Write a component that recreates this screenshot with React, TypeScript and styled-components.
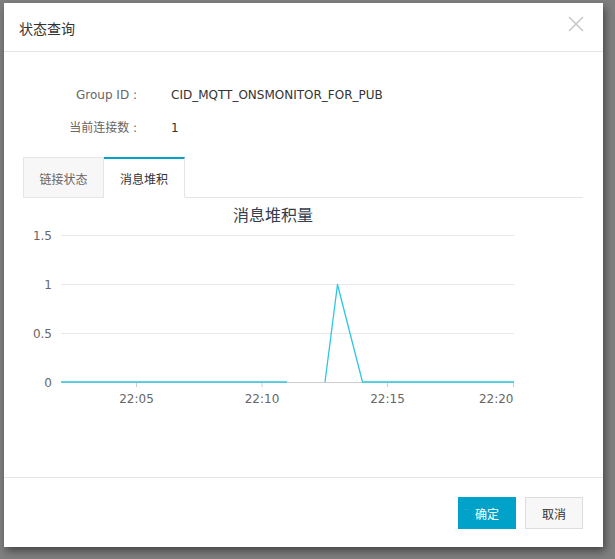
import styled, { createGlobalStyle } from "styled-components";

const GlobalStyle = createGlobalStyle`
  html, body {
    margin: 0;
    padding: 0;
    background: #7f7f7f;
  }
  body {
    font-family: "DejaVu Sans", "Noto Sans CJK SC", sans-serif;
    font-size: 12px;
    color: #333;
  }
`;

const Page = styled.div`
  width: 615px;
  height: 559px;
  padding: 3px 0 0 4px;
  box-sizing: border-box;
`;

const Dialog = styled.div`
  width: 599px;
  height: 544px;
  background: #fff;
  display: flex;
  flex-direction: column;
  box-shadow: 2px 4px 8px rgba(0, 0, 0, 0.45);
`;

const Header = styled.div`
  height: 48px;
  flex-shrink: 0;
  border-bottom: 1px solid #e5e5e5;
  display: flex;
  align-items: center;
  justify-content: space-between;
  padding: 0 19px 0 15px;
`;

const Title = styled.div`
  font-size: 14px;
  color: #333;
  padding-top: 2px;
`;

const Close = styled.button`
  border: 0;
  background: none;
  padding: 0;
  width: 16px;
  height: 16px;
  margin-bottom: 6px;
  cursor: pointer;
  display: flex;
`;

const Body = styled.div`
  flex: 1;
  padding: 33px 20px 0 19px;
  display: flex;
  flex-direction: column;
`;

const InfoGrid = styled.div`
  display: grid;
  grid-template-columns: 114px 1fr;
  column-gap: 34px;
  row-gap: 13px;
  line-height: 20px;
`;

const Label = styled.div`
  text-align: right;
  color: #666;
`;

const Value = styled.div`
  color: #333;
`;

const TabBar = styled.div`
  margin-top: 19px;
  display: flex;
  border-bottom: 1px solid #e5e5e5;
  height: 40px;
`;

const Tab = styled.div<{ $active?: boolean }>`
  width: 81px;
  box-sizing: border-box;
  display: flex;
  align-items: center;
  justify-content: center;
  margin-bottom: -1px;
  height: 41px;
  color: ${(p) => (p.$active ? "#333" : "#666")};
  background: ${(p) => (p.$active ? "#fff" : "#f7f7f7")};
  border: 1px solid #e5e5e5;
  border-top: ${(p) => (p.$active ? "2px solid #00a2ca" : "1px solid #e5e5e5")};
  border-bottom: ${(p) => (p.$active ? "1px solid #fff" : "1px solid #e5e5e5")};
  border-left: ${(p) => (p.$active ? "0" : "1px solid #e5e5e5")};
  padding-top: 1px;
`;

const Chart = styled.svg`
  display: block;
  width: 559px;
  height: 222px;
`;

const Footer = styled.div`
  height: 70px;
  flex-shrink: 0;
  border-top: 1px solid #e5e5e5;
  display: flex;
  justify-content: flex-end;
  align-items: flex-start;
  gap: 9px;
  padding: 19px 20px 0 0;
  box-sizing: border-box;
`;

const Button = styled.button<{ $primary?: boolean }>`
  width: 58px;
  height: 32px;
  font-family: "DejaVu Sans", "Noto Sans CJK SC", sans-serif;
  font-size: 12px;
  cursor: pointer;
  border: 1px solid ${(p) => (p.$primary ? "#00a2ca" : "#ddd")};
  background: ${(p) => (p.$primary ? "#00a2ca" : "#f7f7f7")};
  color: ${(p) => (p.$primary ? "#fff" : "#333")};
`;

const yTicks = [
  { v: "1.5", y: 236 },
  { v: "1", y: 285 },
  { v: "0.5", y: 334 },
  { v: "0", y: 383 },
];

const xTicks = [
  { t: "22:05", x: 136.5 },
  { t: "22:10", x: 262 },
  { t: "22:15", x: 387.5 },
  { t: "22:20", x: 513.5 },
];

function BacklogChart() {
  return (
    <Chart viewBox="23 199 559 222">
      <text x="273" y="222" textAnchor="middle" fontSize="16" fill="#333d4e"
        fontFamily="'DejaVu Sans', 'Noto Sans CJK SC', sans-serif">
        消息堆积量
      </text>
      {yTicks.map((t) => (
        <g key={t.v}>
          <line x1="61" x2="514" y1={t.y + 0.5} y2={t.y + 0.5} stroke="#e8e8e8" />
          <text x="52" y={t.y + 4.5} textAnchor="end" fontSize="12" fill="#666">
            {t.v}
          </text>
        </g>
      ))}
      <line x1="61" x2="514" y1="383.5" y2="383.5" stroke="#ccc" />
      {xTicks.map((t) => (
        <g key={t.t}>
          <line x1={t.x} x2={t.x} y1="383" y2="388" stroke="#ccc" />
          <text x={t.x} y="404" textAnchor={t.t === "22:20" ? "end" : "middle"} fontSize="12" fill="#666">
            {t.t}
          </text>
        </g>
      ))}
      <polyline points="61,383 287,383" fill="none" stroke="#2ec7e1" strokeWidth="1.3" />
      <polyline points="325,383 337.5,285.5 362.5,383 514,383" fill="none" stroke="#2ec7e1"
        strokeWidth="1.3" strokeLinejoin="round" />
    </Chart>
  );
}

export default function App() {
  return (
    <Page>
      <GlobalStyle />
      <Dialog>
        <Header>
          <Title>状态查询</Title>
          <Close aria-label="close">
            <svg width="16" height="16" viewBox="0 0 16 16">
              <path d="M1 1 L15 15 M15 1 L1 15" stroke="#c8c8c8" strokeWidth="1.6" />
            </svg>
          </Close>
        </Header>
        <Body>
          <InfoGrid>
            <Label>Group ID :</Label>
            <Value>CID_MQTT_ONSMONITOR_FOR_PUB</Value>
            <Label>当前连接数 :</Label>
            <Value>1</Value>
          </InfoGrid>
          <TabBar>
            <Tab>链接状态</Tab>
            <Tab $active>消息堆积</Tab>
          </TabBar>
          <BacklogChart />
        </Body>
        <Footer>
          <Button $primary>确定</Button>
          <Button>取消</Button>
        </Footer>
      </Dialog>
    </Page>
  );
}
